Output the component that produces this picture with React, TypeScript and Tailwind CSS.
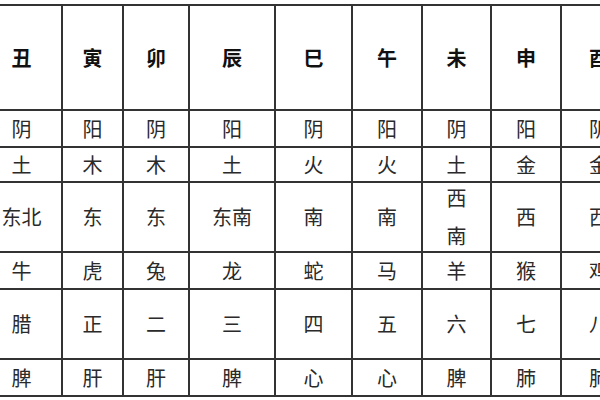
const HEAD = ["丑", "寅", "卯", "辰", "巳", "午", "未", "申", "酉"]

const ROWS: { h: string; cells: string[][] }[] = [
  { h: "h-[35px]", cells: [["阴"], ["阳"], ["阴"], ["阳"], ["阴"], ["阳"], ["阴"], ["阳"], ["阴"]] },
  { h: "h-[33px]", cells: [["土"], ["木"], ["木"], ["土"], ["火"], ["火"], ["土"], ["金"], ["金"]] },
  { h: "h-[68px]", cells: [["东北"], ["东"], ["东"], ["东南"], ["南"], ["南"], ["西", "南"], ["西"], ["西"]] },
  { h: "h-[35px]", cells: [["牛"], ["虎"], ["兔"], ["龙"], ["蛇"], ["马"], ["羊"], ["猴"], ["鸡"]] },
  { h: "h-[68px]", cells: [["腊"], ["正"], ["二"], ["三"], ["四"], ["五"], ["六"], ["七"], ["八"]] },
  { h: "h-[35px]", cells: [["脾"], ["肝"], ["肝"], ["脾"], ["心"], ["心"], ["脾"], ["肺"], ["肺"]] },
]

export default function App() {
  return (
    <div
      className="w-[600px] h-[400px] overflow-hidden bg-white"
      style={{ fontFamily: '"Noto Sans CJK SC", "Noto Sans", sans-serif' }}
    >
      <div className="mt-[4px] ml-[-20px] w-max border-2 border-[#333] bg-[#333] grid grid-cols-[79px_59px_64px_84px_75px_68px_67px_68px_74px] gap-[2px]">
        {HEAD.map((t, i) => (
          <div
            key={`h-${i}`}
            className="h-[103px] bg-white flex items-center justify-center text-[20px] font-bold text-[#111]"
          >
            {t}
          </div>
        ))}
        {ROWS.map((row, r) =>
          row.cells.map((lines, c) => (
            <div
              key={`${r}-${c}`}
              className={`${row.h} bg-white flex flex-col items-center justify-center gap-[12px] text-[20px] leading-[26px] text-[#2a2a2a]`}
            >
              {lines.map((l, k) => (
                <span key={k}>{l}</span>
              ))}
            </div>
          ))
        )}
      </div>
    </div>
  )
}
